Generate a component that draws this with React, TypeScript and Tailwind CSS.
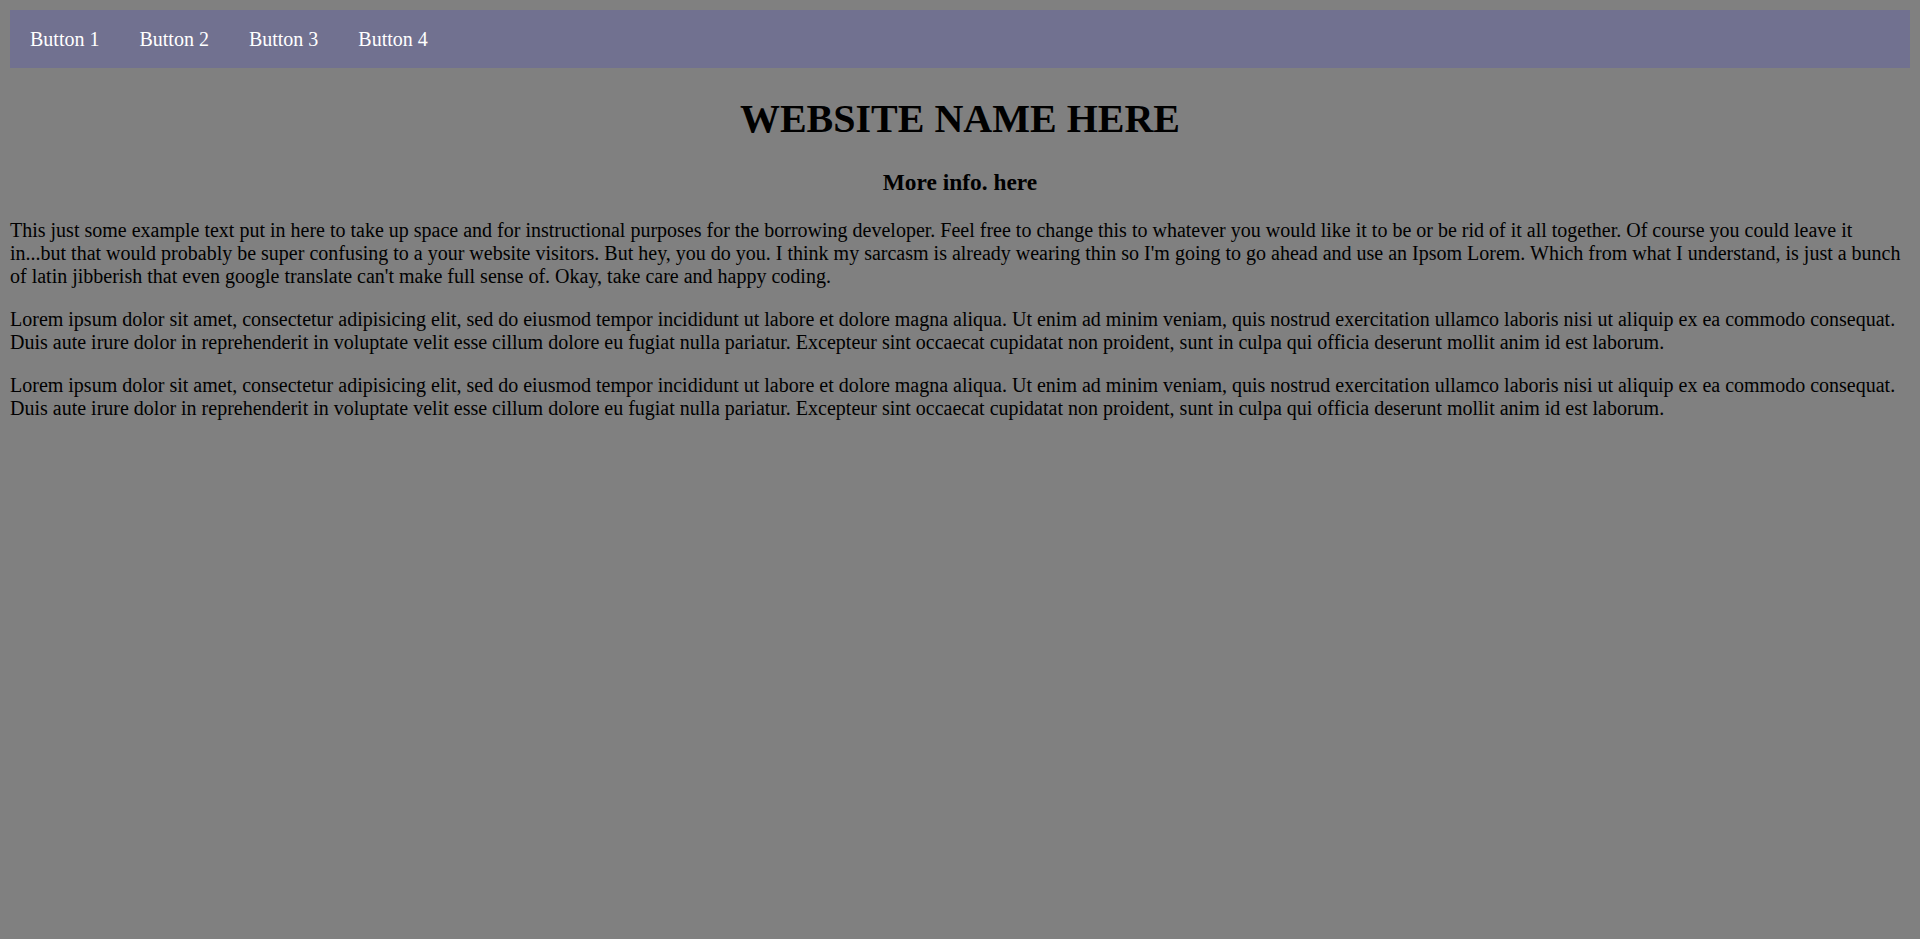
import React from 'react';

const buttons = ['Button 1', 'Button 2', 'Button 3', 'Button 4'];

const Paragraphs = [
  "This just some example text put in here to take up space and for instructional purposes for the borrowing developer. Feel free to change this to whatever you would like it to be or be rid of it all together. Of course you could leave it in...but that would probably be super confusing to a your website visitors. But hey, you do you. I think my sarcasm is already wearing thin so I'm going to go ahead and use an Ipsom Lorem. Which from what I understand, is just a bunch of latin jibberish that even google translate can't make full sense of. Okay, take care and happy coding.",
  'Lorem ipsum dolor sit amet, consectetur adipisicing elit, sed do eiusmod tempor incididunt ut labore et dolore magna aliqua. Ut enim ad minim veniam, quis nostrud exercitation ullamco laboris nisi ut aliquip ex ea commodo consequat. Duis aute irure dolor in reprehenderit in voluptate velit esse cillum dolore eu fugiat nulla pariatur. Excepteur sint occaecat cupidatat non proident, sunt in culpa qui officia deserunt mollit anim id est laborum.',
  'Lorem ipsum dolor sit amet, consectetur adipisicing elit, sed do eiusmod tempor incididunt ut labore et dolore magna aliqua. Ut enim ad minim veniam, quis nostrud exercitation ullamco laboris nisi ut aliquip ex ea commodo consequat. Duis aute irure dolor in reprehenderit in voluptate velit esse cillum dolore eu fugiat nulla pariatur. Excepteur sint occaecat cupidatat non proident, sunt in culpa qui officia deserunt mollit anim id est laborum.',
];

export default function App() {
  return (
    <div className="min-h-screen bg-[#808080] p-[10px] text-black font-['Liberation_Serif','Times_New_Roman',serif] text-[20px] leading-[normal]">
      {/* nav bar */}
      <ul className="flex bg-[#717190]">
        {buttons.map((b) => (
          <li key={b}>
            <a href="#" className="block px-[20px] py-[17.5px] text-white">
              {b}
            </a>
          </li>
        ))}
      </ul>

      <h1 className="my-[26.8px] text-center text-[40px] font-bold">WEBSITE NAME HERE</h1>
      <h3 className="my-[23.4px] text-center text-[23.4px] font-bold">More info. here</h3>

      {Paragraphs.map((t, i) => (
        <p key={i} className="my-[20px]">
          {t}
        </p>
      ))}
    </div>
  );
}
